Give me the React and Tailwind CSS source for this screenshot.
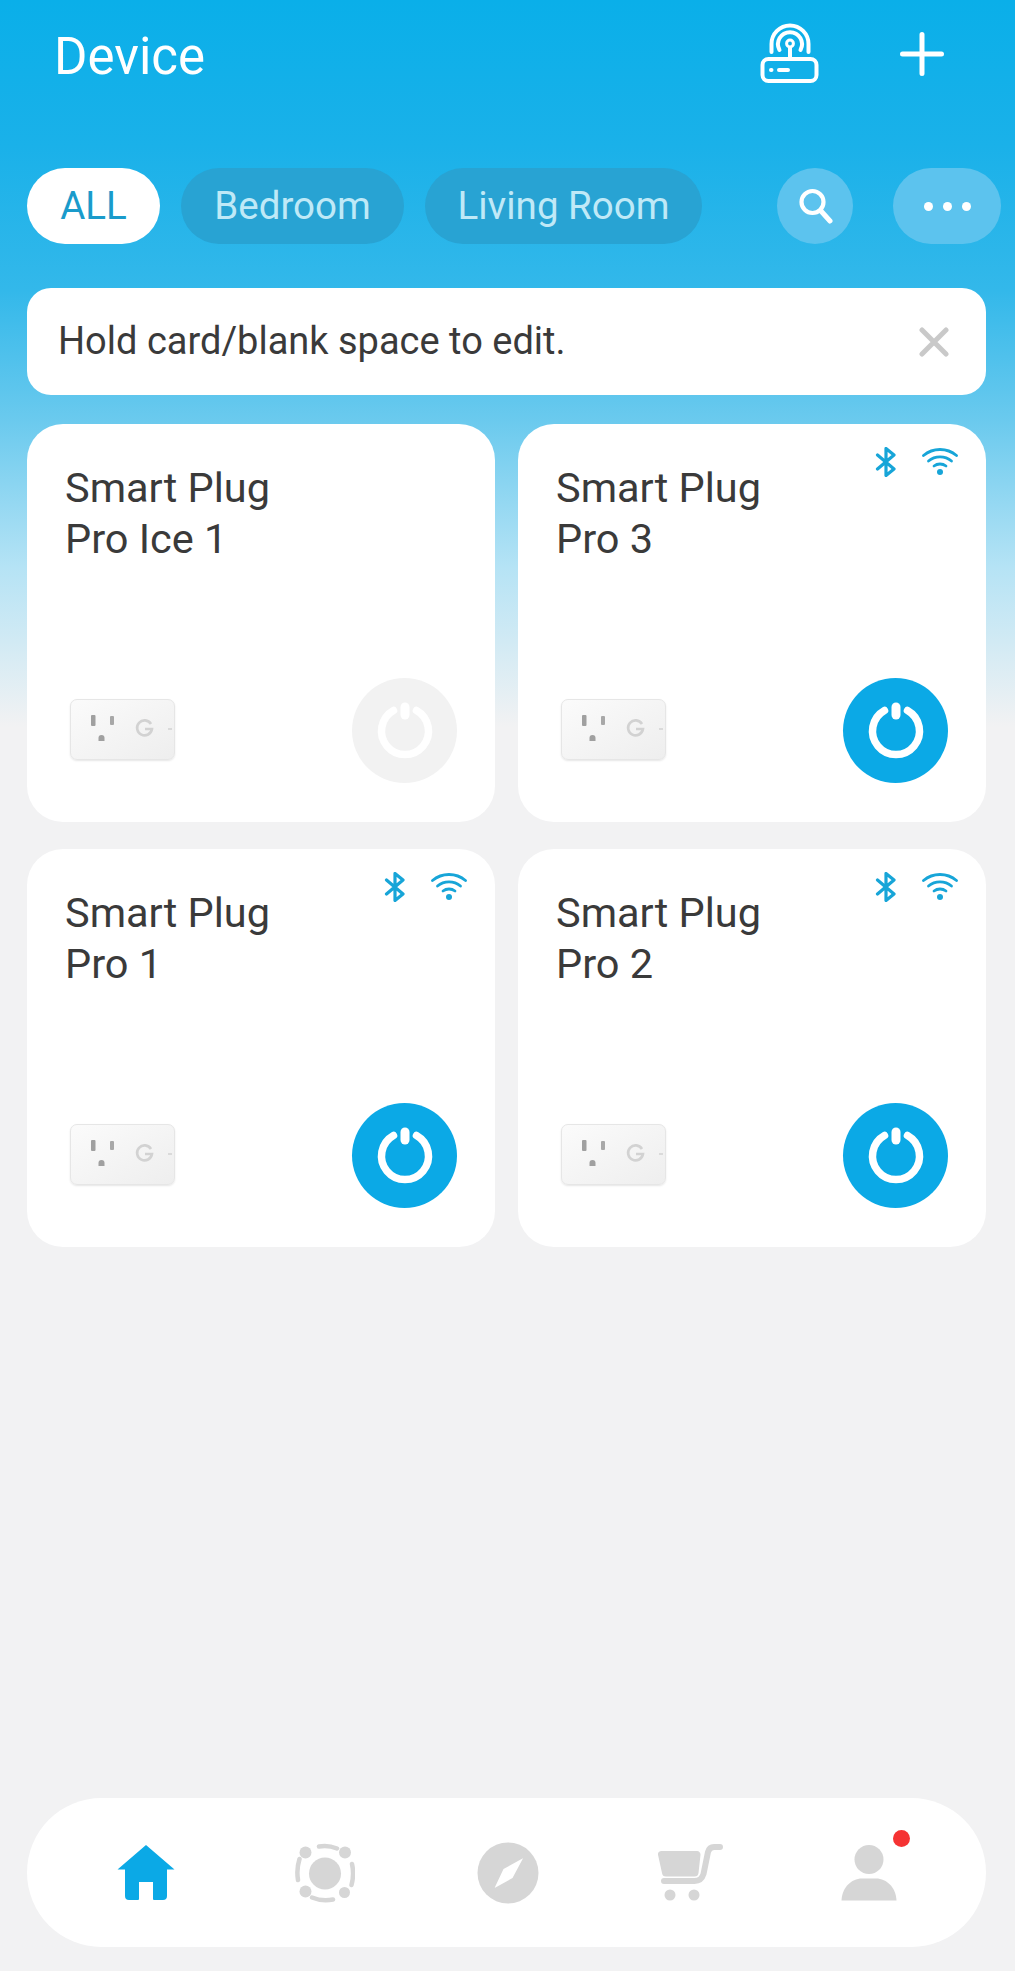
import React from "react";

const Blue = "#0ba9e6";

function Router() {
  return (
    <svg width="60" height="60" viewBox="0 0 60 60" fill="none" stroke="white" strokeWidth="4" strokeLinecap="round">
      <rect x="2.500" y="36" width="54" height="22" rx="6" />
      <path d="M11 47h.5M19 47h9" strokeWidth="4" />
      <path d="M30 25V36" />
      <circle cx="30" cy="20.500" r="3.400" strokeWidth="3" />
      <path d="M19.500 27a12 12 0 1 1 21 0" />
      <path d="M11.500 29V21a18.500 18.500 0 0 1 37 0v8" />
    </svg>
  );
}

function Plus() {
  return (
    <svg width="44" height="44" viewBox="0 0 44 44" stroke="white" strokeWidth="5" strokeLinecap="round">
      <path d="M22 2.500v39M2.500 22h39" />
    </svg>
  );
}

function Search() {
  return (
    <svg width="36" height="38" viewBox="0 0 36 38" fill="none" stroke="white" strokeWidth="4.200" strokeLinecap="round">
      <circle cx="15.500" cy="15" r="11" />
      <path d="M24 24l9 10" strokeWidth="5" />
    </svg>
  );
}

function Close() {
  return (
    <svg width="30" height="30" viewBox="0 0 30 30" stroke="#c9c9c9" strokeWidth="5" strokeLinecap="round">
      <path d="M3 3l24 24M27 3L3 27" />
    </svg>
  );
}

function Bluetooth() {
  return (
    <svg width="22" height="30" viewBox="0 0 22 30" fill="none" stroke="#17a5d8" strokeWidth="3.200" strokeLinecap="round" strokeLinejoin="round">
      <path d="M2.500 8l16.500 14-8 6.500V1.500L19 8 2.500 22" />
    </svg>
  );
}

function Wifi() {
  return (
    <svg width="36" height="28" viewBox="0 0 36 28" fill="none" stroke="#17a5d8" strokeWidth="2.800" strokeLinecap="round">
      <path d="M1.500 7.500C11-.5 25-.5 34.500 7.500" />
      <path d="M6.500 13c6.500-5.500 16.500-5.500 23 0" />
      <path d="M12 18c3.500-2.700 8.500-2.700 12 0" />
      <circle cx="18" cy="24" r="3" fill="#17a5d8" stroke="none" />
    </svg>
  );
}

function Power() {
  return (
    <svg width="60" height="60" viewBox="0 0 60 60" fill="none" stroke="white" strokeLinecap="round">
      <path d="M18.500 9.500A23.500 23.500 0 1 0 41.500 9.500" strokeWidth="7.500" />
      <path d="M30 6v8" strokeWidth="9" />
    </svg>
  );
}

function PlugPicture() {
  return (
    <div className="relative h-[61px] w-[105px] rounded-[7px] border border-[#e6e6e6] bg-gradient-to-br from-[#fbfbfb] to-[#eeeeee] shadow-[0_1px_2px_rgba(0,0,0,0.1)]">
      <svg className="absolute left-0 top-0" width="105" height="61" viewBox="0 0 105 61">
        <rect x="20" y="15" width="4.500" height="11" rx="1" fill="#a0a0a0" />
        <rect x="39" y="16" width="4" height="9" rx="1" fill="#a8a8a8" />
        <path d="M27.500 41v-3a3 3 0 0 1 6 0v3z" fill="#a0a0a0" />
        <path d="M80 24a7.500 7.500 0 1 0 1 5h-7" fill="none" stroke="#d2d2d2" strokeWidth="2.600" />
        <path d="M97 29h4" stroke="#d2d2d2" strokeWidth="1.500" />
      </svg>
    </div>
  );
}

function Card({ line1, line2, online = true }) {
  return (
    <div className="relative h-[398px] rounded-[36px] bg-white pl-[38px] pt-[38px]">
      {online && (
        <div className="absolute right-[28px] top-[23px] flex items-center gap-[25px]">
          <Bluetooth />
          <Wifi />
        </div>
      )}
      <div className="text-[41.500px] leading-[51px] text-[#3a3a3a]">
        <div>{line1}</div>
        <div>{line2}</div>
      </div>
      <div className="absolute bottom-[62px] left-[43px]">
        <PlugPicture />
      </div>
      <div className={`absolute bottom-[39px] right-[38px] flex h-[105px] w-[105px] items-center justify-center rounded-full ${online ? "bg-[#0ba9e6]" : "bg-[#f2f2f2]"}`}>
        <Power />
      </div>
    </div>
  );
}

function Home() {
  return (
    <svg width="58" height="56" viewBox="0 0 58 56" fill={Blue}>
      <path d="M29 0L57.500 24.500H50V51a4 4 0 0 1-4 4H37a1 1 0 0 1-1-1V37H22v17a1 1 0 0 1-1 1H12a4 4 0 0 1-4-4V24.500H.5z" />
    </svg>
  );
}

function Orbit() {
  return (
    <svg width="60" height="60" viewBox="0 0 60 60" fill="#d6d6d6" stroke="none">
      <circle cx="30" cy="30.500" r="16" />
      <circle cx="10.500" cy="9.500" r="6" />
      <circle cx="50" cy="9.500" r="6" />
      <circle cx="10.500" cy="48.500" r="6" />
      <circle cx="49.500" cy="49.500" r="5.500" />
      <g fill="none" stroke="#d6d6d6" strokeWidth="4.500" strokeLinecap="round">
        <path d="M24 3.500C30 2.300 36 3 42 5.500" />
        <path d="M57 21c1.600 7 1.400 14-.5 21" />
        <path d="M17 54.500C23 57 31 57.800 38 56.500" />
        <path d="M3 37C1.800 30 2 24 4.500 16" />
      </g>
    </svg>
  );
}

function Compass() {
  return (
    <svg width="62" height="62" viewBox="0 0 62 62">
      <circle cx="31" cy="31" r="30.500" fill="#d6d6d6" />
      <path d="M45.500 16.500Q46 16 45.800 16.800L35.500 36 18.500 45.500Q17.500 46 18 45L26.500 27z" fill="white" />
    </svg>
  );
}

function Cart() {
  return (
    <svg width="66" height="60" viewBox="0 0 66 60">
      <path d="M4 8h36a3.500 3.500 0 0 1 3.500 3.800L41.500 30a4 4 0 0 1-4 3.500H9a4 4 0 0 1-4-3.500L1 11.800A3.500 3.500 0 0 1 4 8z" fill="#d6d6d6" />
      <path d="M63 4H57c-3.500 0-5 1.500-6 5L46.500 31c-1.500 5-4 7-9 7H7" fill="none" stroke="#d6d6d6" strokeWidth="6" strokeLinecap="round" />
      <circle cx="13" cy="52" r="5.500" fill="#d6d6d6" />
      <circle cx="37" cy="52" r="5.500" fill="#d6d6d6" />
    </svg>
  );
}

function Person() {
  return (
    <svg width="56" height="56" viewBox="0 0 56 56" fill="#d6d6d6">
      <circle cx="28" cy="14.500" r="14.500" />
      <path d="M.5 55.500C1 43 10 33.500 21 33.500h14C46 33.500 55 43 55.500 55.500z" />
    </svg>
  );
}

export default function App() {
  return (
    <div className="relative h-[1971px] w-[1015px] overflow-hidden bg-[#f2f2f3] font-['Roboto',sans-serif]">
      <div className="flex h-[727px] flex-col bg-[linear-gradient(180deg,#0aafe9_0%,#1ab1e9_20%,#33b8ea_40%,#6bcaee_58%,#b5e3f5_78%,#f2f2f3_100%)] px-[27px]">
        <div className="flex h-[114px] shrink-0 items-center pl-[27px] pr-[44px]">
          <div className="flex-1 text-[51px] text-white">Device</div>
          <div className="mb-[8px]">
            <Router />
          </div>
          <div className="mb-[6px] ml-[80px]">
            <Plus />
          </div>
        </div>

        <div className="mt-[54px] flex h-[76px] shrink-0 items-stretch text-[38.500px]">
          <div className="flex w-[133px] shrink-0 items-center justify-center rounded-full bg-white text-[#1a9bcb]">ALL</div>
          <div className="ml-[21px] flex w-[223px] shrink-0 items-center justify-center rounded-full bg-[#28a3d3] text-[#bfe9f7]">Bedroom</div>
          <div className="ml-[21px] flex w-[277px] shrink-0 items-center justify-center rounded-full bg-[#28a3d3] text-[#bfe9f7]">Living Room</div>
          <div className="ml-[75px] flex w-[76px] shrink-0 items-center justify-center rounded-full bg-[#5cc3ee]">
            <Search />
          </div>
          <div className="ml-[40px] flex w-[108px] shrink-0 items-center justify-center gap-[10px] rounded-full bg-[#5cc3ee]">
            <span className="h-[9px] w-[9px] rounded-full bg-white" />
            <span className="h-[9px] w-[9px] rounded-full bg-white" />
            <span className="h-[9px] w-[9px] rounded-full bg-white" />
          </div>
        </div>

        <div className="mt-[44px] flex h-[107px] w-[959px] shrink-0 items-center justify-between rounded-[24px] bg-white pl-[31px] pr-[37px] text-[38px] text-[#3a3a3a]">
          <span>Hold card/blank space to edit.</span>
          <Close />
        </div>

        <div className="mt-[29px] grid w-[959px] shrink-0 grid-cols-[468px_468px] gap-x-[23px] gap-y-[27px]">
          <Card line1="Smart Plug" line2="Pro Ice 1" online={false} />
          <Card line1="Smart Plug" line2="Pro 3" />
          <Card line1="Smart Plug" line2="Pro 1" />
          <Card line1="Smart Plug" line2="Pro 2" />
        </div>
      </div>

      <div className="absolute bottom-[24px] left-[27px] flex h-[149px] w-[959px] items-center justify-between rounded-full bg-white pl-[90px] pr-[89px]">
        <Home />
        <div className="ml-[2px]">
          <Orbit />
        </div>
        <div className="ml-[3px]">
          <Compass />
        </div>
        <Cart />
        <div className="relative">
          <Person />
          <span className="absolute right-[-13px] top-[-15px] h-[17px] w-[17px] rounded-full bg-[#f53333]" />
        </div>
      </div>
    </div>
  );
}
